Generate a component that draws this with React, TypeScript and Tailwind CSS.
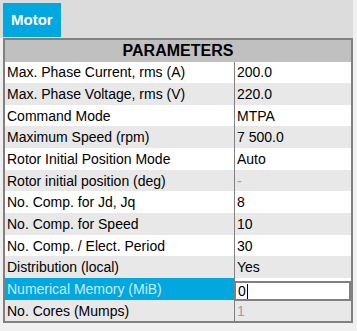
import React from "react";

type Row = { label: string; value: string; muted?: boolean };

const rows: Row[] = [
  { label: "Max. Phase Current, rms (A)", value: "200.0" },
  { label: "Max. Phase Voltage, rms (V)", value: "220.0" },
  { label: "Command Mode", value: "MTPA" },
  { label: "Maximum Speed (rpm)", value: "7 500.0" },
  { label: "Rotor Initial Position Mode", value: "Auto" },
  { label: "Rotor initial position (deg)", value: "-", muted: true },
  { label: "No. Comp. for Jd, Jq", value: "8" },
  { label: "No. Comp. for Speed", value: "10" },
  { label: "No. Comp. / Elect. Period", value: "30" },
  { label: "Distribution (local)", value: "Yes" },
  { label: "Numerical Memory (MiB)", value: "0" },
  { label: "No. Cores (Mumps)", value: "1", muted: true },
];

const SELECTED = 10;

export default function App() {
  return (
    <div
      className="w-[357px] h-[331px] bg-[#f0f0f0] text-black overflow-hidden"
      style={{ fontFamily: '"Liberation Sans", Arial, sans-serif' }}
    >
      <div className="w-[353px] h-[38px] bg-[#dcdcdc] pt-[3px] pl-[3px]">
        <div className="w-[58px] h-[34px] bg-[#00a8df] flex items-center pl-[8px] text-white font-bold text-[15px]">
          Motor
        </div>
      </div>

      <div className="ml-[3px] w-[350px] border-2 border-[#808080] bg-white">
        <div className="h-[21.5px] bg-[#c0c0c0] flex items-center justify-center font-bold text-[16px] leading-none">
          PARAMETERS
        </div>
        {rows.map((r, i) => {
          const selected = i === SELECTED;
          const bg = i % 2 === 1 ? "bg-[#e8e8e8]" : "bg-white";
          return (
            <div key={r.label} className={`flex h-[21.67px] text-[14px] leading-none ${bg}`}>
              <div
                className={`w-[230px] flex items-center pl-[2px] border-r border-[#808080] ${
                  selected ? "bg-[#00a8df] text-[#c8ebf8]" : ""
                }`}
              >
                {r.label}
              </div>
              {selected ? (
                <div className="flex-1 -ml-px flex items-center pl-[2px] bg-white border-2 border-[#808080] mt-[3px] h-[20px]">
                  <span>{r.value}</span>
                  <span className="w-px h-[15px] bg-black ml-px" />
                </div>
              ) : (
                <div
                  className={`flex-1 flex items-center pl-[2px] ${
                    r.muted ? "text-[#a0a0a0]" : ""
                  }`}
                >
                  {r.value}
                </div>
              )}
            </div>
          );
        })}
      </div>
    </div>
  );
}
